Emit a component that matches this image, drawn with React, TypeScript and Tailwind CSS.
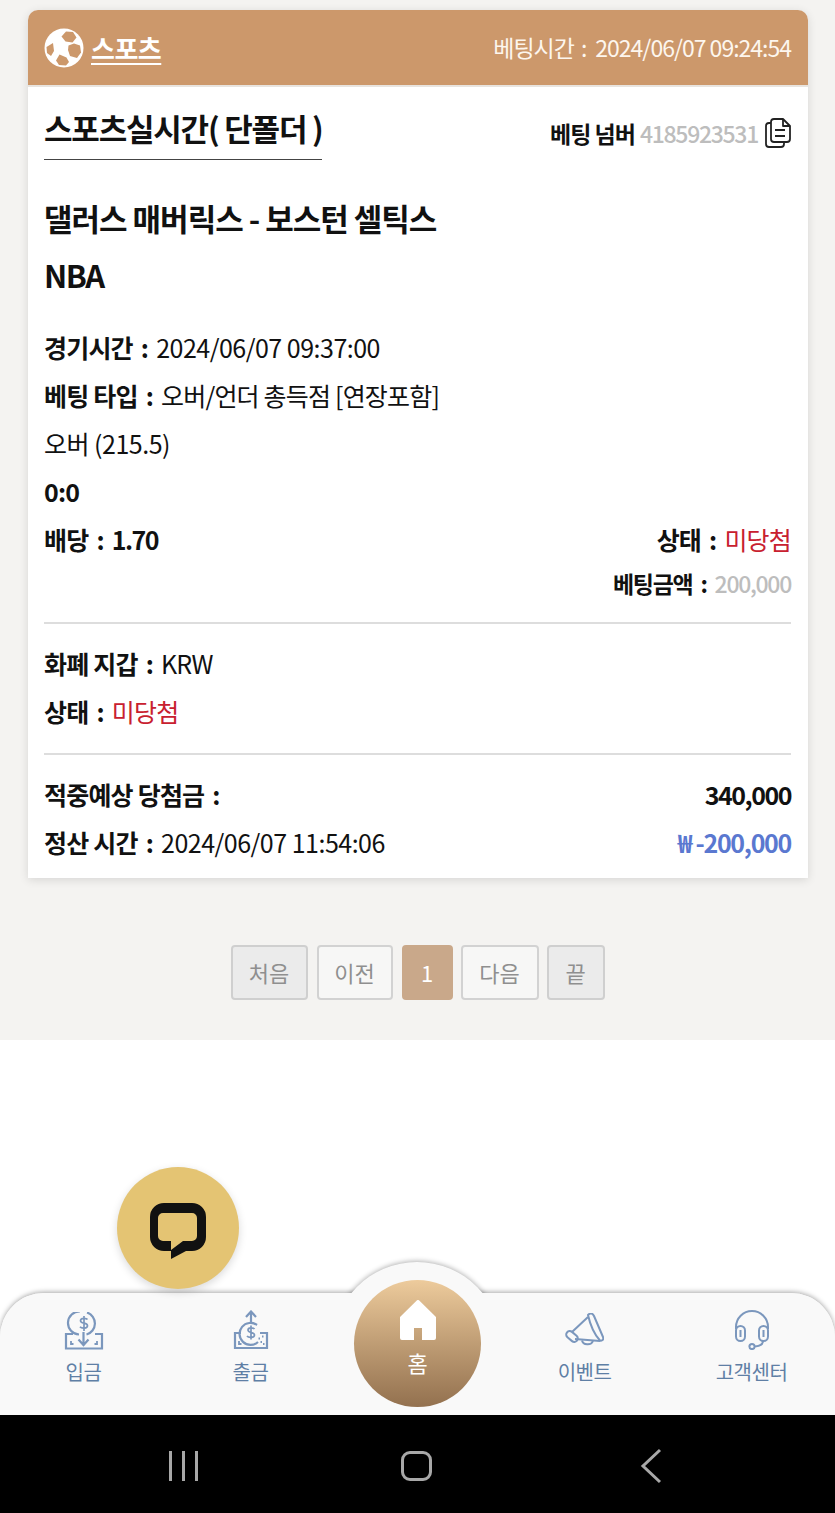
const font = '[font-family:"Noto_Sans_CJK_KR","Noto_Sans",sans-serif]';

function Ball() {
  return (
    <svg width="40" height="40" viewBox="0 0 40 40">
      <circle cx="20" cy="20" r="19.5" fill="#fff" />
      <g fill="#cc986b">
        <path d="M17.500 8.500L22 3.500l7 .5 3.500 5.500-4 5-7-1z" />
        <path d="M24.500 17.500l5.500-2 6 2 1 7-4 5.500-7-2-2-6z" />
        <path d="M15.500 26.500l7 3 2.500 4.500-3 3.500-7-.5-3-4.500z" />
        <path d="M9 15l1 8-3 5-4-3-.5-6z" />
      </g>
    </svg>
  );
}

function CopyIcon() {
  return (
    <svg width="26" height="30" viewBox="0 0 26 30" fill="none" stroke="#222" strokeWidth="1.800" strokeLinejoin="round">
      <path d="M9 1h9l7 7v13a3 3 0 0 1-3 3H9a3 3 0 0 1-3-3V4a3 3 0 0 1 3-3z" />
      <path d="M18 1v7h7M10 12h10M10 18h10" />
      <path d="M6 5H4a3 3 0 0 0-3 3v18a3 3 0 0 0 3 3h12a3 3 0 0 0 3-3v-2" />
    </svg>
  );
}

function DepositIcon() {
  return (
    <svg width="40" height="38" viewBox="0 0 40 38" fill="none" stroke="#7b97bd" strokeWidth="2.200">
      <path d="M9 22H2v14.500h36V22h-7" />
      <path d="M15 22.500a11.500 11.500 0 0 1 1-23" />
      <path d="M23 .5a11.500 11.500 0 0 1-.5 22" />
      <path d="M19.500 20v12.500M14.500 27.500l5 5.500 5-5.500" />
      <path d="M23.500 7.500c-1-1.500-7-2-7 1.200 0 3.500 7 1.500 7 5 0 3-6 3-7.500 1M20 4v15" strokeWidth="1.700" />
      <path d="M7 29v3h2.500M33 29v3h-2.500" strokeWidth="1.800" />
    </svg>
  );
}

function WithdrawIcon() {
  return (
    <svg width="36" height="40" viewBox="0 0 36 40" fill="none" stroke="#7b97bd" strokeWidth="2.200">
      <path d="M8 23H2v15h32V23h-7" />
      <path d="M24 15a11 11 0 1 0 1 17" />
      <path d="M18 12V2M13 7l5-5.500L23 7" />
      <path d="M21.500 19c-1-1.500-6.500-2-6.500 1 0 3.500 6.500 1.500 6.500 5 0 3-6 3-7.500 1M18 15.500v14" strokeWidth="1.700" />
      <path d="M6 31v3h2.500" strokeWidth="1.800" />
      <path d="M25.500 28.500h1.500M29 26.500h1.500M27.500 32h1.500M30 34h1.500" strokeWidth="1.800" />
    </svg>
  );
}

function MegaphoneIcon() {
  return (
    <svg className="mb-[3px]" width="39" height="34" viewBox="0 0 39 34" fill="none" stroke="#7b97bd" strokeWidth="2" strokeLinejoin="round">
      <path d="M23 2c3-3 5-1 6 1l9 21c1 3-1 4-3 3.500C29 21 25 11 23 2z" />
      <path d="M23 4L7 19M10 26l25 2" />
      <rect x="3.500" y="17" width="7" height="13" rx="3.500" transform="rotate(-50 7 23.500)" />
      <path d="M17 27.500c1 4.500 9 5.500 11 .5" />
    </svg>
  );
}

function HeadsetIcon() {
  return (
    <svg width="36" height="40" viewBox="0 0 36 40" fill="none" stroke="#7b97bd" strokeWidth="2">
      <path d="M2 19v-2a16 16 0 0 1 32 0v2" />
      <rect x="2" y="16" width="9" height="15" rx="4.500" />
      <rect x="25" y="16" width="9" height="15" rx="4.500" />
      <path d="M6.500 20v7M29.500 20v7M29 31c0 3-3 5-8 5.500" />
      <circle cx="18" cy="36.500" r="2.600" />
    </svg>
  );
}

function NavItem({ icon, label }: { icon: React.ReactNode; label: string }) {
  return (
    <div className="flex w-[167px] flex-col items-center">
      <div className="flex h-[42px] items-end">{icon}</div>
      <div className="mt-[8px] text-[20px] leading-[28px] tracking-[-0.5px] text-[#5f7fa5]">{label}</div>
    </div>
  );
}

function Row({ children }: { children: React.ReactNode }) {
  return <div className="flex h-[48px] items-center justify-between text-[25px] tracking-[-0.8px] text-[#111]">{children}</div>;
}

function Label({ text }: { text: string }) {
  return <b>{text}<span className="ml-[8px] mr-[8px]">:</span></b>;
}

function PageBtn({ label, className }: { label: string; className: string }) {
  return (
    <div className={`flex h-[55px] items-center justify-center rounded-[4px] border-2 text-[22px] ${className}`}>{label}</div>
  );
}

export default function App() {
  return (
    <div className={`flex h-[1513px] w-[835px] flex-col overflow-hidden bg-white ${font}`}>
      {/* bet card + pager */}
      <div className="h-[1040px] bg-[#f4f3f1] pl-[28px] pr-[27px] pt-[10px]">
        <div className="overflow-hidden rounded-t-[10px] bg-white shadow-[0_2px_10px_rgba(0,0,0,0.12)]">
          <div className="flex h-[75px] items-center justify-between bg-[#cc986b] pl-[16px] pr-[17px] text-white">
            <div className="flex items-center gap-[7px]">
              <Ball />
              <span className="text-[26px] font-bold leading-[30px] tracking-[-0.5px] underline underline-offset-[4px]">스포츠</span>
            </div>
            <span className="text-[23px] tracking-[-1px] text-[#fdf6ee]">베팅시간<span className="ml-[7px] mr-[9px]">:</span>2024/06/07 09:24:54</span>
          </div>
          <div className="border-t-2 border-[#e8e4df] pl-[16px] pr-[17px] pb-[11px]">
            <div className="flex items-start justify-between pt-[20px]">
              <div className="w-[278px] whitespace-nowrap border-b border-[#444] pb-[10px] text-[31px] font-bold leading-[42px] tracking-[-1.2px] text-[#111]">스포츠실시간( 단폴더 )</div>
              <div className="flex items-center gap-[7px] pt-[9px] text-[23px] font-bold tracking-[-1px] text-[#111]">
                <span>베팅 넘버<span className="ml-[5px] font-medium tracking-[-1.300px] text-[#bdbdbd]">4185923531</span></span>
                <CopyIcon />
              </div>
            </div>

            <div className="mt-[33px] text-[31px] font-bold leading-[50px] tracking-[-1px] text-[#111]">댈러스 매버릭스 - 보스턴 셀틱스</div>
            <div className="mt-[7px] text-[31px] font-bold leading-[50px] tracking-[-1.500px] text-[#111]">NBA</div>

            <div className="mt-[24px]">
              <Row><span><Label text="경기시간" /><span className="tracking-[-0.5px]">2024/06/07 09:37:00</span></span></Row>
              <Row><span><Label text="베팅 타입" />오버/언더 총득점 [연장포함]</span></Row>
              <Row><span className="tracking-[-0.5px]">오버 (215.5)</span></Row>
              <Row><b>0:0</b></Row>
              <Row>
                <span><Label text="배당" /><b className="tracking-[-1.500px]">1.70</b></span>
                <span><Label text="상태" /><span className="text-[#c8202f]">미당첨</span></span>
              </Row>
              <div className="flex justify-end pt-[2px] text-[23px] font-bold leading-[34px] tracking-[-1.300px] text-[#111]">
                <span>베팅금액<span className="ml-[8px] mr-[8px]">:</span><span className="font-medium text-[#bdbdbd]">200,000</span></span>
              </div>
            </div>

            <div className="mt-[22px] border-t-2 border-[#ddd] pt-[16px]">
              <Row><span><Label text="화폐 지갑" />KRW</span></Row>
              <Row><span><Label text="상태" /><span className="text-[#c8202f]">미당첨</span></span></Row>
            </div>

            <div className="mt-[17px] border-t-2 border-[#ddd] pt-[16px]">
              <Row>
                <Label text="적중예상 당첨금" />
                <b className="tracking-[-1.500px]">340,000</b>
              </Row>
              <Row>
                <span><Label text="정산 시간" /><span className="tracking-[-0.5px]">2024/06/07 11:54:06</span></span>
                <b className="tracking-[-1.300px] text-[#5a78d0]">₩ -200,000</b>
              </Row>
            </div>
          </div>
        </div>

        <div className="mt-[67px] flex justify-center gap-[9px] pr-[1px] text-[#8f8f8f]">
          <PageBtn label="처음" className="w-[77px] border-[#cfcfcf] bg-[#ebebeb]" />
          <PageBtn label="이전" className="w-[76px] border-[#d2d2d2] bg-[#f7f7f6]" />
          <PageBtn label="1" className="w-[51px] border-[#c9a88a] bg-[#c9a88a] text-white" />
          <div className="-ml-[1px] flex gap-[8px]">
            <PageBtn label="다음" className="w-[78px] border-[#d2d2d2] bg-[#f7f7f6]" />
            <PageBtn label="끝" className="w-[58px] border-[#cfcfcf] bg-[#ebebeb]" />
          </div>
        </div>
      </div>

      <div className="flex-1" />

      {/* bottom nav */}
      <div className="relative h-[122px] rounded-t-[44px] bg-[#f9f9f9] shadow-[0_-1px_5px_rgba(0,0,0,0.35)]">
        <div className="absolute left-[332px] top-[-31px] h-[85px] w-[170px] rounded-t-full bg-[#f9f9f9] shadow-[0_-1px_5px_rgba(0,0,0,0.3)]" />
        <div className="absolute left-0 top-0 h-[122px] w-full rounded-t-[44px] bg-[#f9f9f9]" />
        <div className="absolute left-[325px] top-[-29px] h-[60px] w-[185px] overflow-hidden">
          <div className="ml-[7px] h-[85px] w-[170px] rounded-t-full bg-[#f9f9f9]" />
        </div>

        <div className="relative flex h-full pt-[15px]">
          <NavItem icon={<DepositIcon />} label="입금" />
          <NavItem icon={<WithdrawIcon />} label="출금" />
          <div className="w-[167px]" />
          <NavItem icon={<MegaphoneIcon />} label="이벤트" />
          <NavItem icon={<HeadsetIcon />} label="고객센터" />
        </div>

        <div className="absolute left-[354px] top-[-13px] flex h-[127px] w-[127px] flex-col items-center rounded-full bg-gradient-to-b from-[#edcb9c] to-[#93714f] pt-[20px] text-white">
          <svg width="36" height="40" viewBox="0 0 36 40" fill="#fff">
            <path d="M16.500 .800a2 2 0 0 1 3 0L36 17v21a2 2 0 0 1-2 2H22V28h-8v12H2a2 2 0 0 1-2-2V17z" />
          </svg>
          <span className="mt-[8px] text-[22px] leading-[28px]">홈</span>
        </div>

        <div className="absolute left-[117px] top-[-126px] flex h-[122px] w-[122px] items-center justify-center rounded-full bg-[#e4c473] pt-[5px] shadow-[0_3px_8px_rgba(0,0,0,0.15)]">
          <svg width="56" height="56" viewBox="0 0 56 56" fill="#111" fillRule="evenodd">
            <path d="M14 0h28a14 14 0 0 1 14 14v20a14 14 0 0 1-14 14h-6L21 56v-8h-7A14 14 0 0 1 0 34V14A14 14 0 0 1 14 0zM13 10a5 5 0 0 0-5 5v18a5 5 0 0 0 5 5h8v9l12-9h9a5 5 0 0 0 5-5V15a5 5 0 0 0-5-5z" />
          </svg>
        </div>
      </div>

      {/* android nav bar */}
      <div className="flex h-[98px] items-center bg-black pt-[3px]">
        <div className="flex w-[367px] justify-center gap-[10px]">
          <span className="h-[30px] w-[3px] bg-[#a8a8a8]" />
          <span className="h-[30px] w-[3px] bg-[#a8a8a8]" />
          <span className="h-[30px] w-[3px] bg-[#a8a8a8]" />
        </div>
        <div className="ml-[34px] h-[30px] w-[31px] rounded-[9px] border-[3px] border-[#a8a8a8]" />
        <svg className="ml-[208px]" width="22" height="36" viewBox="0 0 22 36" fill="none" stroke="#a8a8a8" strokeWidth="3">
          <path d="M20 2L3 18l17 16" />
        </svg>
      </div>
    </div>
  );
}
